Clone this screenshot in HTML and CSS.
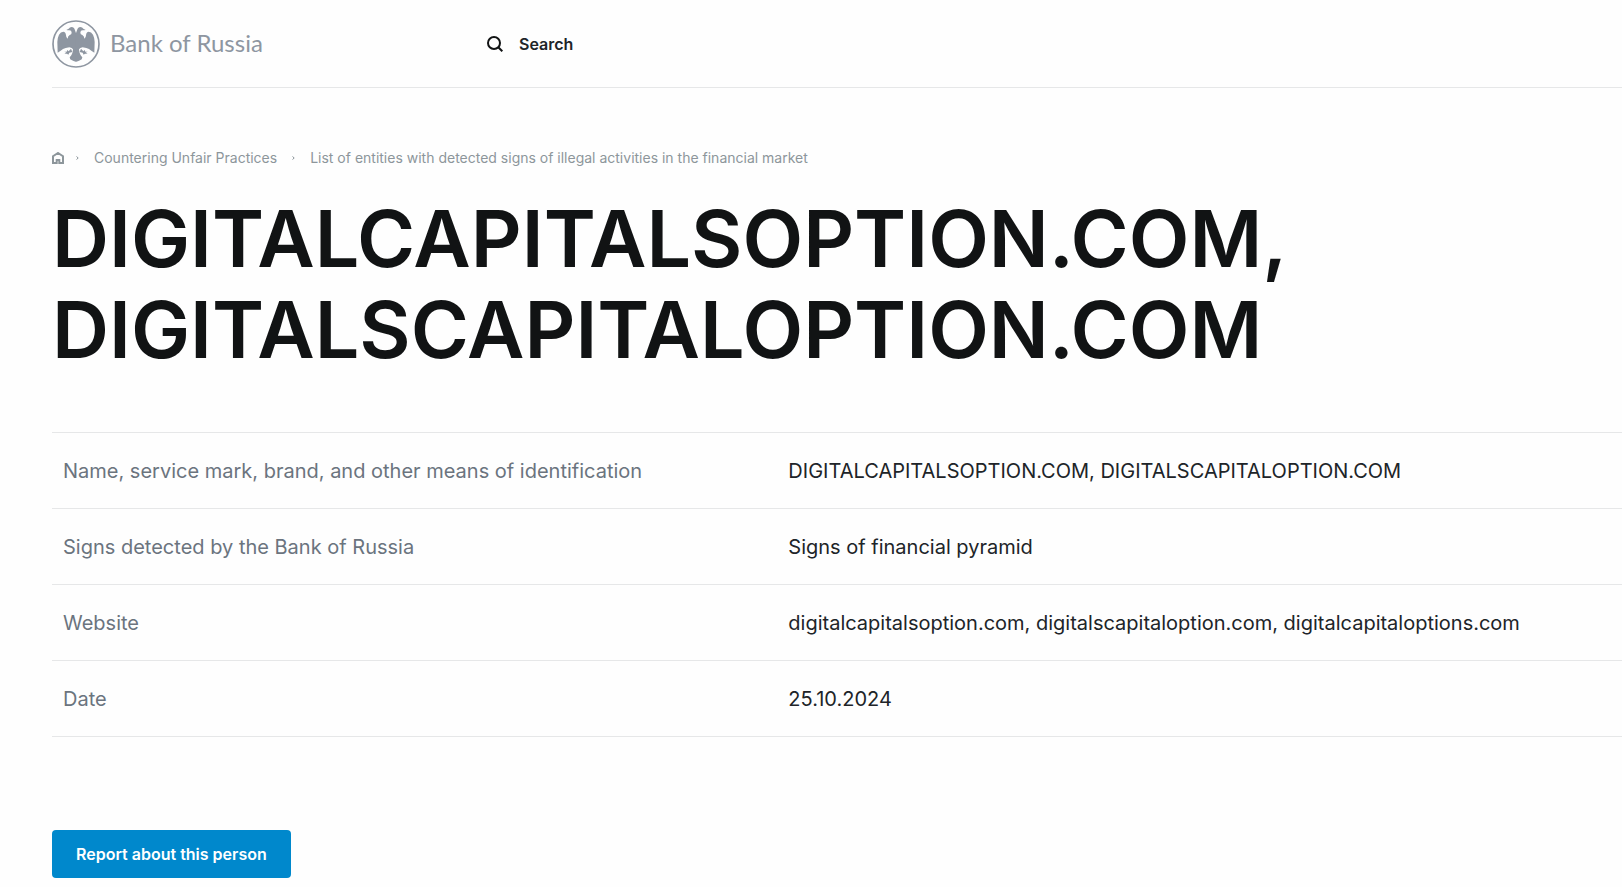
FILE: index.html
```html
<!DOCTYPE html>
<html lang="en">
  <head>
    <meta charset="UTF-8" />
    <meta name="viewport" content="width=device-width, initial-scale=1.0" />
    <title>DIGITALCAPITALSOPTION.COM | Bank of Russia</title>
    <link rel="stylesheet" href="styles.css">
  </head>

  <body>
    <header class="header">
      <a class="logo" href="#">
        <svg class="logo-emblem" viewBox="0 0 144 144" aria-hidden="true">
          <circle cx="72" cy="72" r="69" fill="none" stroke="currentColor" stroke-width="5" />
          <g fill="currentColor">
            <path d="M73 42 L69 31 Q66 21 59 21 Q53 21 50 26 L43 30 Q47 31 52 31 Q59 31 59 38 Q59 43 53 45 Q47 49 47 56 Q42 54 42 46 Q41 35 34 35 Q26 35 21 44 Q16 54 16 66 L17 98 L26 92 L33 87 L41 84 L52 82 L59 84 L63 88 Q62 104 53 112 Q53 119 60 121 Q66 125 73 125 Z" />
            <path d="M57 86 L50 94 L46 90 L44 95 L37 95 L43 98 L37 102 L45 101 L49 104 L52 98 L61 96 Z" />
            <path transform="matrix(-1 0 0 1 144 0)" d="M73 42 L69 31 Q66 21 59 21 Q53 21 50 26 L43 30 Q47 31 52 31 Q59 31 59 38 Q59 43 53 45 Q47 49 47 56 Q42 54 42 46 Q41 35 34 35 Q26 35 21 44 Q16 54 16 66 L17 98 L26 92 L33 87 L41 84 L52 82 L59 84 L63 88 Q62 104 53 112 Q53 119 60 121 Q66 125 73 125 Z" />
            <path transform="matrix(-1 0 0 1 144 0)" d="M57 86 L50 94 L46 90 L44 95 L37 95 L43 98 L37 102 L45 101 L49 104 L52 98 L61 96 Z" />
          </g>
        </svg>
        <span class="logo-text">Bank of Russia</span>
      </a>
      <button class="search" type="button">
        <svg class="search-icon" viewBox="0 0 16 16" aria-hidden="true">
          <circle cx="7" cy="7" r="6" />
          <path d="M11.3 11.3 L15.3 15.3" />
        </svg>
        Search
      </button>
    </header>

    <main class="content">
      <nav class="breadcrumbs" aria-label="Breadcrumbs">
        <a class="home" href="#" aria-label="Home">
          <svg class="home-icon" viewBox="0 0 12 12" aria-hidden="true">
            <path d="M1 11 V4.2 L6 1 L11 4.2 V11 H7.3 V8 H4.7 V11 Z" />
          </svg>
        </a>
        <svg class="arrow" viewBox="0 0 3 4" aria-hidden="true"><path d="M0.5 0.5 L2.2 2 L0.5 3.5" /></svg>
        <a href="#">Countering Unfair Practices</a>
        <svg class="arrow" viewBox="0 0 3 4" aria-hidden="true"><path d="M0.5 0.5 L2.2 2 L0.5 3.5" /></svg>
        <a href="#">List of entities with detected signs of illegal activities in the financial market</a>
      </nav>

      <h1>DIGITALCAPITALSOPTION.COM,<br>DIGITALSCAPITALOPTION.COM</h1>

      <table class="details">
        <tbody>
          <tr>
            <th scope="row">Name, service mark, brand, and other means of identification</th>
            <td>DIGITALCAPITALSOPTION.COM, DIGITALSCAPITALOPTION.COM</td>
          </tr>
          <tr>
            <th scope="row">Signs detected by the Bank of Russia</th>
            <td>Signs of financial pyramid</td>
          </tr>
          <tr>
            <th scope="row">Website</th>
            <td>digitalcapitalsoption.com, digitalscapitaloption.com, digitalcapitaloptions.com</td>
          </tr>
          <tr>
            <th scope="row">Date</th>
            <td>25.10.2024</td>
          </tr>
        </tbody>
      </table>

      <button class="report" type="button">Report about this person</button>
    </main>
  </body>
</html>
```
FILE: styles.css
```css
* {
  padding: 0;
  margin: 0;
  box-sizing: border-box;
}

body {
  padding-left: 52px;
  font-family: Inter, "Liberation Sans", sans-serif;
  color: #202428;
  background-color: #fefefe;
}

a {
  color: inherit;
  text-decoration: none;
}

button {
  border: none;
  font: inherit;
  cursor: pointer;
}

.header {
  display: flex;
  align-items: center;
  height: 88px;
  border-bottom: 1px solid #e6e7e8;
}

.logo {
  display: flex;
  align-items: center;
  gap: 10px;
  width: 435px;
  color: #8e96a1;
}

.logo-emblem {
  width: 48px;
  height: 48px;
}

.logo-text {
  padding-bottom: 2px;
  font-family: Lato, sans-serif;
  font-size: 24px;
}

.search {
  display: flex;
  align-items: center;
  gap: 16px;
  background: none;
  color: #202428;
  font-size: 16px;
  font-weight: 600;
}

.search-icon {
  width: 16px;
  height: 16px;
  fill: none;
  stroke: #111314;
  stroke-width: 2;
}

.breadcrumbs {
  display: flex;
  align-items: center;
  margin-top: 60px;
  font-size: 14px;
  line-height: 20px;
  color: #8d969b;
}

.home,
.home-icon {
  display: block;
  width: 12px;
  height: 12px;
}

.home-icon {
  fill: none;
  stroke: currentColor;
  stroke-width: 2;
}

.arrow {
  width: 3px;
  height: 4px;
  margin: 0 15px;
  fill: none;
  stroke: currentColor;
}

.home + .arrow {
  margin-left: 12px;
}

h1 {
  margin-top: 25px;
  font-size: 79px;
  font-weight: 600;
  line-height: 91px;
  color: #111314;
}

.details {
  width: 100%;
  margin-top: 57px;
  border-collapse: collapse;
  border-top: 1px solid #e6e7e8;
  font-size: 20px;
  line-height: 30px;
}

.details tr {
  border-bottom: 1px solid #e6e7e8;
}

.details th,
.details td {
  padding: 23px 11px 22px;
  text-align: left;
  font-weight: 400;
}

.details th {
  width: 46.2%;
  color: #6b747e;
}

.report {
  margin: 93px 0 8px;
  padding: 12px 24px;
  border-radius: 4px;
  background-color: #0088cc;
  color: #ffffff;
  font-size: 16px;
  font-weight: 600;
  line-height: 24px;
}
```
